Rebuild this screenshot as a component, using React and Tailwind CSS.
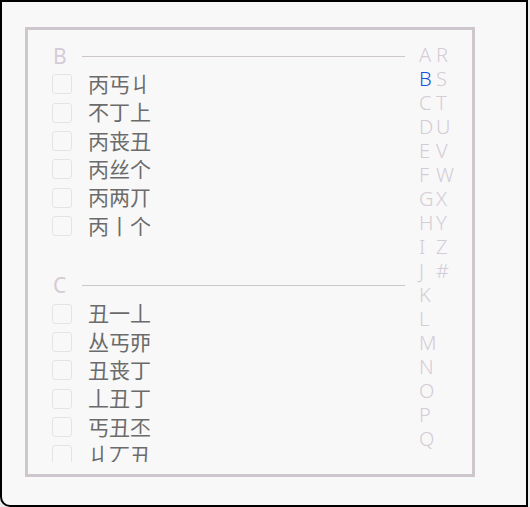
import React from "react";

const sections = [
  { letter: "B", items: ["丙丐丩", "不丁上", "丙丧丑", "丙丝个", "丙两丌", "丙丨个"] },
  { letter: "C", items: ["丑一丄", "丛丐丣", "丑丧丁", "丄丑丁", "丐丑丕", "丩丆丑"] },
];

const col1 = "ABCDEFGHIJKLMNOPQ".split("");
const col2 = "RSTUVWXYZ#".split("");

function IndexLetter({ ch }) {
  return (
    <div className={ch === "B" ? "h-[24px] text-[#1450dc]" : "h-[24px] text-[#d4ccd6]"}>{ch}</div>
  );
}

export default function App() {
  return (
    <div className="w-[530px] h-[507px] bg-[#ececec]">
      <div
        className="w-[528px] h-[507px] border-2 border-black rounded-bl-[10px] bg-[#f8f8f8] pl-[23px] pt-[25px]"
        style={{ fontFamily: '"Noto Sans", "Noto Sans CJK SC", sans-serif' }}
      >
        <div className="w-[450px] h-[450px] border-[3px] border-[#cdc7cd] flex">
          <div className="flex-1 pl-[24px] py-[12px]">
            <div className="h-full overflow-hidden">
              {sections.map((s, i) => (
                <div key={s.letter} className={i > 0 ? "mt-[31px]" : ""}>
                  <div className="h-[28.33px] flex items-center">
                    <div className="w-[30px] pl-[1px] text-[21px] leading-none text-[#d4ccd6]">
                      {s.letter}
                    </div>
                    <div className="flex-1 h-px bg-[#cdc6cd]"></div>
                  </div>
                  {s.items.map((t) => (
                    <div key={t} className="h-[28.33px] flex items-center">
                      <div className="w-[20px] h-[20px] border border-[#e4e4e4] rounded-[3px]"></div>
                      <div className="ml-[16px] text-[21px] leading-none text-[#6b6b6b]">{t}</div>
                    </div>
                  ))}
                </div>
              ))}
            </div>
          </div>
          <div className="flex pl-[14px] pr-[20px] pt-[13px] text-[20px] leading-[24px] font-light">
            <div className="w-[17px]">
              {col1.map((c) => (
                <IndexLetter key={c} ch={c} />
              ))}
            </div>
            <div className="w-[16px]">
              {col2.map((c) => (
                <IndexLetter key={c} ch={c} />
              ))}
            </div>
          </div>
        </div>
      </div>
    </div>
  );
}
